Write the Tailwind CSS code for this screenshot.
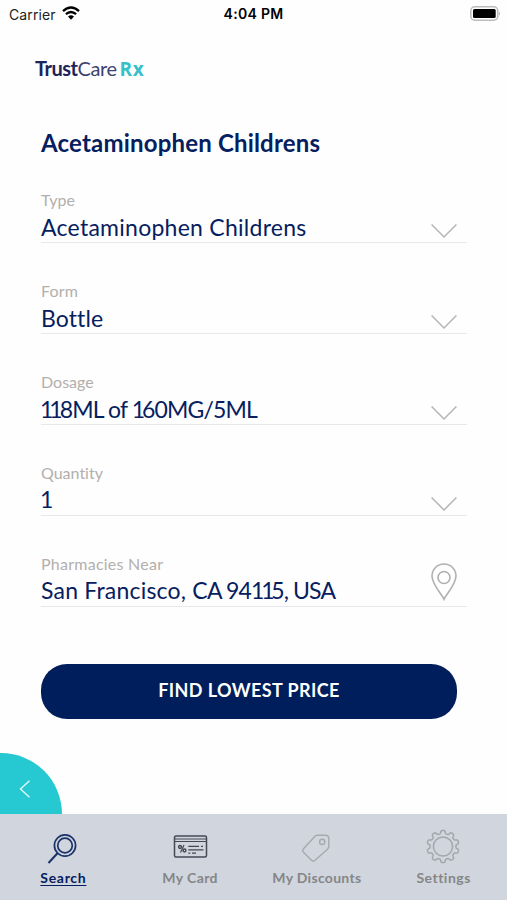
<!DOCTYPE html>
<html lang="en">
<head>
<meta charset="utf-8">
<title>TrustCare Rx</title>
<script src="https://cdn.jsdelivr.net/npm/@tailwindcss/browser@4"></script>
</head>
<body class="bg-white">
<div class="relative flex h-[900px] w-[507px] flex-col overflow-hidden bg-[#fefefe] font-['Lato','Liberation_Sans',sans-serif] whitespace-nowrap">
  <header class="grid h-[28px] shrink-0 grid-cols-3 items-center pr-[6px] pl-[9px] font-['Inter',sans-serif] text-[14px] text-[#222]">
    <div class="flex items-center gap-[6px]"><span class="tracking-[0.1px]">Carrier</span>
      <svg class="-mt-[2px] h-[14px] w-[18px]" viewBox="0 0 18 14" fill="none" stroke="#000" stroke-width="2.3"><path d="M1 5.2Q9-2.1 17 5.2M3.9 8.2Q9 3.7 14.1 8.2"/><path d="M6 10.6Q9 8 12 10.6L9 13.7Z" fill="#000" stroke="none"/></svg>
    </div>
    <div class="-mt-[2px] -ml-[3px] text-center font-semibold tracking-[0.3px] text-black">4:04 PM</div>
    <div class="flex justify-end"><svg class="-mt-[2px] h-[15px] w-[31px]" viewBox="0 0 31 15"><rect x=".8" y=".8" width="27" height="13.4" rx="4" fill="#fff" stroke="#bbb" stroke-width="1.5"/><rect x="3" y="3" width="22.7" height="9" rx="1.5"/><path d="M29.2 5.5Q31 7.5 29.2 9.5Z" fill="#aaa"/></svg></div>
  </header>
  <div class="flex h-[80px] shrink-0 items-center pl-[35px] text-[20px] leading-[20px] text-[#1c2458]">
    <span class="font-bold tracking-[-0.5px]">Trust</span><span class="tracking-[-0.4px] text-[#3c4270]">Care</span><span class="ml-[3px] mt-[1px] font-['Open_Sans',sans-serif] text-[19px] font-bold tracking-[0.6px] text-[#37bfca]">Rx</span>
  </div>
  <main class="flex grow flex-col pl-[41px] text-[#06205f]">
    <h1 class="mt-[21px] h-[28px] text-[24px] leading-[28px] font-bold tracking-[0.18px]">Acetaminophen Childrens</h1>
    <section class="flex h-[86px] w-[426px] items-end justify-between border-b border-[#e6e8eb]">
      <div><div class="h-[22px] text-[16px] leading-[20px] tracking-[0.1px] text-[#b3afac]">Type</div><div class="h-[30px] text-[23px] leading-[30px] tracking-[0.26px]">Acetaminophen Childrens</div></div>
      <svg class="mr-[10px] mb-[3px] h-[16px] w-[26px]" viewBox="0 0 26 16" fill="none" stroke="#b4b4b4" stroke-width="1.5"><path d="M.6 1.5 13 14 25.4 1.5"/></svg>
    </section>
    <section class="flex h-[91px] w-[426px] items-end justify-between border-b border-[#e6e8eb]">
      <div><div class="h-[22px] text-[16px] leading-[20px] tracking-[0.2px] text-[#b3afac]">Form</div><div class="h-[30px] text-[23px] leading-[30px] tracking-[0.1px]">Bottle</div></div>
      <svg class="mr-[10px] mb-[3px] h-[16px] w-[26px]" viewBox="0 0 26 16" fill="none" stroke="#b4b4b4" stroke-width="1.5"><path d="M.6 1.5 13 14 25.4 1.5"/></svg>
    </section>
    <section class="flex h-[91px] w-[426px] items-end justify-between border-b border-[#e6e8eb]">
      <div><div class="h-[22px] text-[16px] leading-[20px] text-[#b3afac]">Dosage</div><div class="-ml-[1px] h-[30px] text-[23px] leading-[30px] tracking-[-0.85px]"><span class="tracking-[-4px]">11</span><span class="ml-[1px]">8ML of </span><span class="tracking-[-3px]">1</span>60MG/5ML</div></div>
      <svg class="mr-[10px] mb-[3px] h-[16px] w-[26px]" viewBox="0 0 26 16" fill="none" stroke="#b4b4b4" stroke-width="1.5"><path d="M.6 1.5 13 14 25.4 1.5"/></svg>
    </section>
    <section class="flex h-[91px] w-[426px] items-end justify-between border-b border-[#e6e8eb]">
      <div><div class="h-[22px] text-[16px] leading-[20px] [font-variant-ligatures:none] text-[#b3afac]">Quantity</div><div class="-ml-[1px] h-[30px] text-[23px] leading-[29px]">1</div></div>
      <svg class="mr-[10px] mb-[3px] h-[16px] w-[26px]" viewBox="0 0 26 16" fill="none" stroke="#b4b4b4" stroke-width="1.5"><path d="M.6 1.5 13 14 25.4 1.5"/></svg>
    </section>
    <section class="flex h-[91px] w-[426px] items-end justify-between border-b border-[#e6e8eb]">
      <div><div class="h-[22px] text-[16px] leading-[20px] tracking-[0.25px] text-[#b3afac]">Pharmacies Near</div><div class="h-[30px] text-[23px] leading-[29px]"><span class="tracking-[0.2px]">San Francisco, </span><span class="tracking-[-0.8px]">CA 94</span><span class="tracking-[-3.2px]">11</span><span class="tracking-[-0.9px]">5, USA</span></div></div>
      <svg class="mr-[10px] mb-[5px] h-[38px] w-[26px]" viewBox="0 0 26 38" fill="none" stroke="#b0b0b0" stroke-width="1.6"><path d="M13 36.2C11 31.5 1 21.5 1 13a12 12 0 0 1 24 0C25 21.5 15 31.5 13 36.2Z"/><circle cx="13" cy="14.5" r="6"/></svg>
    </section>
    <button class="mt-[57px] h-[55px] w-[416px] rounded-[26px] bg-[#001e5b] pb-[2px] text-[18px] font-bold tracking-[0.4px] text-white">FIND LOWEST PRICE</button>
  </main>
  <nav class="grid h-[86px] shrink-0 grid-cols-4 bg-[#d1d5dd] text-[14px] leading-[18px] font-bold tracking-[0.4px] text-[#858688]">
    <div class="flex flex-col items-center"><svg class="mt-[17px] h-[34px] w-[32px]" viewBox="0 0 32 34" fill="none" stroke="#1b3269" stroke-width="1.7"><circle cx="18" cy="14.5" r="10.6"/><circle cx="18" cy="14.5" r="7.3"/><path d="M10.7 22 1.5 32" stroke-width="2"/></svg><span class="mt-[4px] tracking-[0.7px] text-[#06205f] underline underline-offset-[2px]">Search</span></div>
    <div class="flex flex-col items-center"><svg class="mt-[17px] h-[34px] w-[36px]" viewBox="0 0 36 34" fill="none" stroke="#424a55" stroke-width="1.5"><rect x="2.5" y="5" width="32" height="21" rx="1.5"/><path d="M3 8H34M3 10.5H34" stroke-width="1.2"/><path d="M16.3 15.3H27M29 15.3h2M16.3 18.8H31.5M16.3 22.2h2M20 22.2h4" stroke-width="1.2"/><path d="M12 14 8.5 21.5" stroke-width="1.2"/><circle cx="8" cy="16" r="1.4"/><circle cx="12.5" cy="19.5" r="1.4"/></svg><span class="mt-[4px]">My Card</span></div>
    <div class="flex flex-col items-center"><svg class="mt-[17px] h-[34px] w-[32px]" viewBox="0 0 32 34" fill="none" stroke="#a6a9ae" stroke-width="1.4" stroke-linejoin="round"><path d="M14 5.2Q15 4.3 17 4.3H24.5Q27.8 4.3 27.8 7.5V15Q27.8 17 26.5 18.3L14 29.3Q12.2 31 10.5 29.3L2.5 21.3Q.8 19.5 2.5 17.8Z"/><circle cx="21.2" cy="10.9" r="2.6"/></svg><span class="mt-[4px] tracking-[0.3px]">My Discounts</span></div>
    <div class="flex flex-col items-center"><svg class="mt-[15px] mr-[1px] h-[35px] w-[36px]" viewBox="-18 -17.5 36 35" fill="none" stroke="#a3a6ab" stroke-width="1.5" stroke-linejoin="round"><path id="gear"/><circle r="9.6"/></svg><span class="mt-[5px] tracking-[0.5px] [font-variant-ligatures:none]">Settings</span></div>
  </nav>
  <div class="absolute top-[753px] left-0 flex h-[61px] w-[62px] items-center rounded-tr-full bg-[#26c9d1] pl-[19px]"><svg class="mt-[10px] h-[18px] w-[12px]" viewBox="0 0 12 18" fill="none" stroke="#d7f6f7" stroke-width="1.5"><path d="M10.5.7 1.5 9 10.5 17.3"/></svg></div>
</div>
<script>
  // Gear outline: rounded teeth on a circle
  let d = '';
  for (let i = 0; i < 360; i++) {
    const a = i * Math.PI / 180;
    const r = 14.5 + 1.6 * Math.tanh(2.2 * Math.cos(10 * (a - Math.PI / 2)));
    d += (i ? 'L' : 'M') + (r * Math.cos(a)).toFixed(2) + ' ' + (r * Math.sin(a)).toFixed(2);
  }
  document.getElementById('gear').setAttribute('d', d + 'Z');
</script>
</body>
</html>
